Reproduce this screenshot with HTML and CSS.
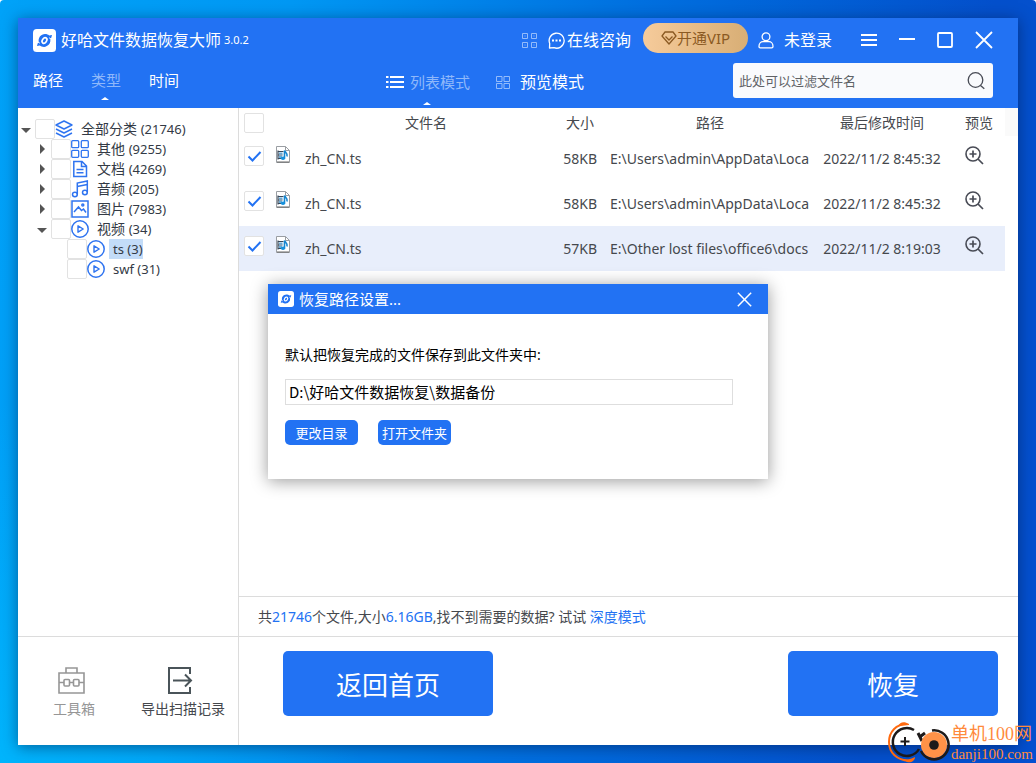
FILE: index.html
```html
<!DOCTYPE html>
<html lang="zh-CN">
<head>
<meta charset="utf-8">
<title>好哈文件数据恢复大师</title>
<link rel="stylesheet" href="styles.css">
</head>
<body>
<svg class="defs" width="0" height="0" aria-hidden="true">
  <symbol id="i-logo" viewBox="0 0 24 24">
    <rect width="24" height="24" rx="4" fill="#fff"/>
    <path d="M6.300 14.500C4.500 9.500 8.500 5.300 12.500 5.300c2 0 3.300.6 4.400 1.500l3-.6-1.300 4.200M17.700 9.500c1.800 5-2.200 9.200-6.200 9.200-2 0-3.300-.6-4.400-1.500l-3 .6 1.300-4.200" fill="#2272f3"/>
    <circle cx="12" cy="12" r="5.600" fill="#2272f3"/>
    <ellipse cx="12" cy="12" rx="3" ry="4" transform="rotate(35 12 12)" fill="#fff"/>
    <ellipse cx="12" cy="12" rx="1.300" ry="2.200" transform="rotate(35 12 12)" fill="#2272f3"/>
    <path d="M4.200 13.200l3 1.600M19.800 10.800l-3-1.600" stroke="#fff" stroke-width="1"/>
  </symbol>
  <symbol id="i-play" viewBox="0 0 18 18">
    <circle cx="9" cy="9" r="8.200" fill="none" stroke="#2f74f0" stroke-width="1.500"/>
    <path d="M7 5.800v6.400l5.200-3.200z" fill="none" stroke="#2f74f0" stroke-width="1.400" stroke-linejoin="round"/>
  </symbol>
  <symbol id="i-file" viewBox="0 0 14 17">
    <path d="M.5.500h9l4 4v12H.5z" fill="#fff" stroke="#9a9ea3"/>
    <path d="M9.500.500v4h4" fill="none" stroke="#9a9ea3"/>
    <path d="M1 16h12" stroke="#666"/>
    <path d="M1.500 5.500h6M1.500 12.500h4M2 4.500v9M1.500 9h5" fill="none" stroke="#38485a" stroke-width="1.200"/>
    <path d="M3 6.500h3.500v2H3zM3 9.800h3V12H3z" fill="#6aa9d4"/>
    <path d="M8.500 12V4.500c.5 2 3.500 2.500 2.500 6" fill="none" stroke="#1686d0" stroke-width="1.600"/>
    <ellipse cx="7" cy="12.300" rx="2.200" ry="1.700" fill="#1690dc"/>
  </symbol>
  <symbol id="i-zoom" viewBox="0 0 20 20">
    <circle cx="8" cy="8" r="7" fill="none" stroke="#484b55" stroke-width="1.600"/>
    <path d="M13 13l5 5M4.500 8h7M8 4.500v7" fill="none" stroke="#484b55" stroke-width="1.700"/>
  </symbol>
  <symbol id="i-close" viewBox="0 0 18 18">
    <path d="M1 1l16 16M17 1L1 17" fill="none" stroke="#fff" stroke-width="1.800"/>
  </symbol>
</svg>

<div class="desktop">
  <div class="window">
    <header class="header">
      <div class="titlebar">
        <svg class="logo"><use href="#i-logo"/></svg>
        <h1 class="title">好哈文件数据恢复大师</h1>
        <span class="version">3.0.2</span>
        <button class="plain qr" aria-label="二维码">
          <svg width="15" height="15" viewBox="0 0 15 15" fill="none" stroke="#94bcfb"><path d="M.5.500h5v5h-5zM9.500.500h5v5h-5zM.5 9.500h5v5h-5zM9.500 9.500h5v5h-5zM2.500 3h1M11.500 3h1M2.500 12h1M11.500 12h1"/></svg>
        </button>
        <button class="plain chat">
          <svg width="17" height="17" viewBox="0 0 17 17"><path d="M1.500 16l.2-4.500A7.500 7.500 0 1 1 6 15.700z" fill="none" stroke="#fff" stroke-width="1.300" stroke-linejoin="round"/><path d="M4 7.500h2v2H4zM7.500 7.500h2v2h-2zM11 7.500h2v2h-2z" fill="#fff"/></svg>
          在线咨询
        </button>
        <button class="vip">
          <svg width="16" height="14" viewBox="0 0 16 14" fill="none" stroke="#8b5a23" stroke-width="1.300" stroke-linejoin="round"><path d="M4 1h8l3 4-7 8-7-8zM4.500 5.500L8 9l3.500-3.500"/></svg>开通VIP
        </button>
        <button class="plain login">
          <svg width="16" height="17" viewBox="0 0 16 17" fill="none" stroke="#fff" stroke-width="1.300"><circle cx="8" cy="4.800" r="3.900"/><path d="M1 14.500c0-3 2-4.800 4-4.800h6c2 0 4 1.800 4 4.800 0 .9-.5 1.300-1.300 1.300H2.300C1.500 15.800 1 15.400 1 14.500z"/></svg>
          未登录
        </button>
        <div class="controls">
          <button class="plain" aria-label="菜单"><svg width="16" height="16" viewBox="0 0 16 16"><path d="M0 3h16M0 8h16M0 13h16" stroke="#fff" stroke-width="2"/></svg></button>
          <button class="plain" aria-label="最小化"><svg width="16" height="16" viewBox="0 0 16 16"><path d="M0 7h16" stroke="#fff" stroke-width="2"/></svg></button>
          <button class="plain" aria-label="最大化"><svg width="16" height="16" viewBox="0 0 16 16"><rect x="1" y="1" width="14" height="14" rx="1" fill="none" stroke="#fff" stroke-width="1.800"/></svg></button>
          <button class="plain" aria-label="关闭"><svg width="18" height="18"><use href="#i-close"/></svg></button>
        </div>
      </div>
      <div class="toolbar">
        <nav class="tabs">
          <button class="plain tab">路径</button>
          <button class="plain tab active">类型</button>
          <button class="plain tab">时间</button>
        </nav>
        <div class="modes">
          <button class="plain mode active">
            <svg width="18" height="14" viewBox="0 0 18 14"><path d="M0 2h2.500M4 2h14M0 7h2.500M4 7h14M0 12h2.500M4 12h14" stroke="#fff" stroke-width="2"/></svg>
            列表模式
          </button>
          <button class="plain mode preview">
            <svg width="14" height="13" viewBox="0 0 14 13" fill="none" stroke="#94bcfb"><path d="M.5.500h5.500v5H.5zM8 .500h5.500v5H8zM.5 7.500h5.500v5H.5zM8 7.500h5.500v5H8z"/></svg>
            预览模式
          </button>
        </div>
        <div class="search">
          <input type="text" placeholder="此处可以过滤文件名" aria-label="过滤文件名">
          <button class="plain" aria-label="搜索"><svg width="18" height="18" viewBox="0 0 18 18" fill="none" stroke="#484b55" stroke-width="1.300"><circle cx="8.500" cy="8" r="7.300"/><path d="M13.500 13.500l3.800 3.300"/></svg></button>
        </div>
      </div>
    </header>

    <div class="body">
      <aside class="sidebar">
        <ul class="tree">
          <li>
            <div class="node"><button class="plain arrow open" aria-label="折叠"></button><input type="checkbox" id="t0" class="check">
              <svg width="18" height="18" viewBox="0 0 18 18" fill="none" stroke="#2f74f0" stroke-width="1.400" stroke-linejoin="round"><path d="M9 1l8 4-8 4-8-4zM1 9l8 4 8-4M1 13l8 4 8-4"/></svg>
              <label for="t0">全部分类 <span class="count">(21746)</span></label></div>
            <ul>
              <li><div class="node"><button class="plain arrow" aria-label="展开"></button><input type="checkbox" id="t1" class="check">
                <svg width="18" height="18" viewBox="0 0 18 18" fill="none" stroke="#2f74f0" stroke-width="1.300"><rect x=".7" y=".7" width="7" height="7" rx="1"/><rect x="10.300" y=".7" width="7" height="7" rx="1"/><rect x=".7" y="10.300" width="7" height="7" rx="1"/><rect x="10.300" y="10.300" width="7" height="7" rx="1"/></svg>
                <label for="t1">其他 <span class="count">(9255)</span></label></div></li>
              <li><div class="node"><button class="plain arrow" aria-label="展开"></button><input type="checkbox" id="t2" class="check">
                <svg width="18" height="18" viewBox="0 0 18 18" fill="none" stroke="#2f74f0" stroke-width="1.500"><path d="M2.800 1.500h8.200l4.500 4.500v10.500H2.800zM10.500 1.500v5h5M5.500 9.500h7M5.500 12.800h7"/></svg>
                <label for="t2">文档 <span class="count">(4269)</span></label></div></li>
              <li><div class="node"><button class="plain arrow" aria-label="展开"></button><input type="checkbox" id="t3" class="check">
                <svg width="18" height="18" viewBox="0 0 18 18" fill="none" stroke="#2f74f0" stroke-width="1.500"><path d="M6.300 14.500V3l10-2v11.500M6.300 6.500l10-2"/><ellipse cx="3.900" cy="14.500" rx="2.400" ry="2.200"/><ellipse cx="13.900" cy="12.500" rx="2.400" ry="2.200"/></svg>
                <label for="t3">音频 <span class="count">(205)</span></label></div></li>
              <li><div class="node"><button class="plain arrow" aria-label="展开"></button><input type="checkbox" id="t4" class="check">
                <svg width="18" height="18" viewBox="0 0 18 18" fill="none" stroke="#2f74f0" stroke-width="1.500"><rect x="1" y="1" width="16" height="16"/><path d="M3 12l4.500-5 3 3.500L12.500 9l2.500 3.500"/><circle cx="11.800" cy="5" r="1"/></svg>
                <label for="t4">图片 <span class="count">(7983)</span></label></div></li>
              <li><div class="node"><button class="plain arrow open" aria-label="折叠"></button><input type="checkbox" id="t5" class="check">
                <svg width="18" height="18"><use href="#i-play"/></svg>
                <label for="t5">视频 <span class="count">(34)</span></label></div>
                <ul>
                  <li><div class="node leaf"><input type="checkbox" id="t6" class="check"><svg width="18" height="18"><use href="#i-play"/></svg><label for="t6" class="selected"><span class="count">ts (3)</span></label></div></li>
                  <li><div class="node leaf"><input type="checkbox" id="t7" class="check"><svg width="18" height="18"><use href="#i-play"/></svg><label for="t7"><span class="count">swf (31)</span></label></div></li>
                </ul>
              </li>
            </ul>
          </li>
        </ul>
      </aside>

      <main class="main">
        <div class="list">
          <table class="files">
            <colgroup><col class="c-check"><col class="c-icon"><col><col class="c-size"><col class="c-path"><col class="c-date"><col class="c-view"></colgroup>
            <thead>
              <tr><th><input type="checkbox" class="check" aria-label="全选"></th><th></th><th>文件名</th><th>大小</th><th>路径</th><th>最后修改时间</th><th class="view">预览</th></tr>
            </thead>
            <tbody>
              <tr><td><input type="checkbox" class="check" checked aria-label="选择 zh_CN.ts"></td><td><svg class="ficon"><use href="#i-file"/></svg></td><td class="name">zh_CN.ts</td><td class="size">58KB</td><td class="path"><div>E:\Users\admin\AppData\Loca</div></td><td class="date">2022/11/2 8:45:32</td><td class="view"><button class="plain" aria-label="预览"><svg width="20" height="20"><use href="#i-zoom"/></svg></button></td></tr>
              <tr><td><input type="checkbox" class="check" checked aria-label="选择 zh_CN.ts"></td><td><svg class="ficon"><use href="#i-file"/></svg></td><td class="name">zh_CN.ts</td><td class="size">58KB</td><td class="path"><div>E:\Users\admin\AppData\Loca</div></td><td class="date">2022/11/2 8:45:32</td><td class="view"><button class="plain" aria-label="预览"><svg width="20" height="20"><use href="#i-zoom"/></svg></button></td></tr>
              <tr class="current"><td><input type="checkbox" class="check" checked aria-label="选择 zh_CN.ts"></td><td><svg class="ficon"><use href="#i-file"/></svg></td><td class="name">zh_CN.ts</td><td class="size">57KB</td><td class="path"><div>E:\Other lost files\office6\docs</div></td><td class="date">2022/11/2 8:19:03</td><td class="view"><button class="plain" aria-label="预览"><svg width="20" height="20"><use href="#i-zoom"/></svg></button></td></tr>
            </tbody>
          </table>
          <div class="gutter"></div>
        </div>
        <p class="status">共<span class="hl">21746</span>个文件,大小<span class="hl">6.16GB</span>,找不到需要的数据? 试试 <a href="#" class="deep">深度模式</a></p>
      </main>
    </div>

    <footer class="footer">
      <div class="tools">
        <button class="plain tool muted">
          <svg width="27" height="27" viewBox="0 0 27 27" fill="none" stroke="#969696" stroke-width="1.600"><path d="M1 6h25v20H1zM8 6V1h11v5M1 15.500h5M11.500 15.500h4M21 15.500h5"/><rect x="6" y="12.500" width="5.500" height="6.500" rx="1"/><rect x="15.500" y="12.500" width="5.500" height="6.500" rx="1"/></svg>
          工具箱
        </button>
        <button class="plain tool">
          <svg width="27" height="27" viewBox="0 0 27 27" fill="none" stroke="#4a5459" stroke-width="2"><path d="M23 7V1H2v25h21v-6M6 13.500h18M18 7.500l6 6-6 6"/></svg>
          导出扫描记录
        </button>
      </div>
      <div class="actions">
        <button class="big">返回首页</button>
        <button class="big">恢复</button>
      </div>
    </footer>

    <div class="overlay">
      <section class="dialog" role="dialog" aria-labelledby="dlg-title">
        <div class="dialog-head">
          <svg width="16" height="16"><use href="#i-logo"/></svg>
          <h2 id="dlg-title">恢复路径设置...</h2>
          <button class="plain" aria-label="关闭对话框"><svg width="15" height="15"><use href="#i-close"/></svg></button>
        </div>
        <div class="dialog-body">
          <label for="dir">默认把恢复完成的文件保存到此文件夹中:</label>
          <input id="dir" type="text" value="D:\好哈文件数据恢复\数据备份">
          <div class="dialog-actions">
            <button class="small">更改目录</button>
            <button class="small">打开文件夹</button>
          </div>
        </div>
      </section>
    </div>
  </div>

  <div class="watermark">
    <svg width="64" height="42" viewBox="0 0 64 42" fill="none">
      <path d="M20 3C9 3 2 11 2 21c0 11 8 18 20 19" stroke="#ff6a0f" stroke-width="2"/>
      <path d="M11 5c2-4 6-5 11-2v1zM16 38c5 1 8 0 12-2 0 4-4 6-8 5z" fill="#ff6a0f"/>
      <path d="M27 9A14 14 0 1 0 32 28" stroke="#1d1a1a" stroke-width="2.500"/>
      <path d="M13.500 20.500h9M18 16v9" stroke="#1d1a1a" stroke-width="2"/>
      <path d="M31 12l4 8M34 15l4-3" stroke="#1d1a1a" stroke-width="3"/>
      <circle cx="47" cy="24" r="13" fill="#ff9248"/>
      <path d="M45 9.500A14.500 14.500 0 1 1 34 30" stroke="#1d1a1a" stroke-width="2.500"/>
      <circle cx="47" cy="24" r="4.800" fill="#1d1a1a"/>
    </svg>
    <div class="wm-text"><span class="wm-name">单机100网</span><span class="wm-url">danji100.com</span></div>
  </div>
</div>
</body>
</html>
```

FILE: styles.css
```css
* { box-sizing: border-box; }

body {
  margin: 0;
  background: #fff;
  color: #45484d;
  font: 14px/20px "Noto Sans", "Noto Sans CJK SC", sans-serif;
}

h1, h2, p, ul { margin: 0; padding: 0; font-weight: 400; }
ul { list-style: none; }
svg { display: block; flex: none; }
.defs { position: absolute; }
button, input { font: inherit; color: inherit; }

.plain {
  display: flex;
  align-items: center;
  padding: 0;
  border: 0;
  background: none;
  white-space: nowrap;
  cursor: pointer;
}

.desktop {
  position: relative;
  height: 100vh;
  padding: 18px;
  overflow: hidden;
  border-radius: 4px 4px 0 0;
  background:
    radial-gradient(circle at 0 100%, rgba(0, 190, 255, 0.7), rgba(0, 190, 255, 0) 360px),
    linear-gradient(100deg, #00a2f8 0%, #0098f4 25%, #0070e0 55%, #0450cc 85%, #0450d0 100%);
}

.window {
  position: relative;
  display: flex;
  flex-direction: column;
  height: 100%;
  background: #fff;
  box-shadow: 0 2px 14px rgba(0, 20, 60, 0.5);
}

/* header */
.header { background: #2272f3; color: #fff; padding: 0 25px 0 15px; }
.titlebar { display: flex; align-items: center; height: 44px; }
.logo { width: 23px; height: 23px; margin-right: 5px; }
.title { font-size: 16px; white-space: nowrap; }
.version { margin-left: 3px; font-size: 11px; }
.qr { margin-left: auto; margin-right: 11px; }
.chat { gap: 2px; margin-right: 12px; font-size: 16px; }
.vip {
  display: flex;
  align-items: center;
  justify-content: center;
  width: 105px;
  height: 30px;
  margin: 0 10px 4px 0;
  padding: 0;
  border: 0;
  border-radius: 15px;
  background: linear-gradient(90deg, #f6cb9b, #d8ae75);
  color: #8b5a23;
  font-size: 15px;
}
.login { gap: 10px; font-size: 16px; }
.controls { display: flex; gap: 22px; margin-left: 29px; }

.toolbar { display: flex; align-items: flex-start; height: 46px; padding-top: 1px; }
.tabs { display: flex; gap: 28px; }
.tab { position: relative; height: 33px; font-size: 15px; }
.modes { display: flex; gap: 26px; margin-left: 207px; }
.mode { position: relative; gap: 6px; height: 38px; font-size: 15px; }
.preview { gap: 10px; font-size: 16px; }
.tab.active, .mode.active { color: #8fb8fa; }
.tab.active::after, .mode.active::after {
  content: "";
  position: absolute;
  left: 50%;
  bottom: -4px;
  margin-left: -5px;
  border: 4px solid transparent;
  border-top: 0;
  border-bottom: 3px solid #fff;
}
.search {
  display: flex;
  align-items: center;
  width: 260px;
  height: 35px;
  margin-left: auto;
  padding: 0 8px 0 6px;
  border-radius: 3px;
  background: #f9fafd;
}
.search input {
  flex: 1;
  min-width: 0;
  padding: 0;
  border: 0;
  background: none;
  outline: 0;
  font-size: 13px;
  color: #45484d;
}
.search input::placeholder { color: #606266; opacity: 1; }

/* check boxes */
.check {
  appearance: none;
  flex: none;
  display: block;
  width: 20px;
  height: 20px;
  margin: 0;
  border: 1px solid #e2e2e2;
  border-radius: 2px;
  background: #fff;
}
.check:checked {
  background: #fff url("data:image/svg+xml,%3Csvg xmlns='http://www.w3.org/2000/svg' viewBox='0 0 18 18'%3E%3Cpath d='M3.500 9.500l4 4 8-8.500' fill='none' stroke='%232272f3' stroke-width='2'/%3E%3C/svg%3E") center / 18px no-repeat;
}

/* body */
.body { display: flex; flex: 1; min-height: 0; }
.sidebar { width: 221px; padding: 11px 0 0 3px; border-right: 1px solid #dcdcdc; }
.tree ul { padding-left: 16px; }
.node { display: flex; align-items: center; height: 20px; color: #333a45; white-space: nowrap; }
.node label { margin-left: 4px; padding: 0 0 0 4px; }
.count { font-size: 13px; }
.leaf { padding-left: 14px; }
.selected { background: #c3dcf8; }
.arrow { width: 14px; height: 20px; }
.arrow::before {
  content: "";
  margin-left: 3px;
  border: 5px solid transparent;
  border-right: 0;
  border-left-color: #555;
}
.arrow.open::before {
  margin: 2px 0 0;
  border: 5px solid transparent;
  border-bottom: 0;
  border-top-color: #555;
}

.main { display: flex; flex: 1; flex-direction: column; min-width: 0; }
.list { display: flex; flex: 1; min-height: 0; }
.gutter { width: 13px; height: 28px; background: #fafafa; }
.files { flex: 1; width: 100%; table-layout: fixed; border-collapse: collapse; align-self: flex-start; }
.c-check { width: 30px; }
.c-icon { width: 26px; }
.c-size { width: 46px; }
.c-path { width: 214px; }
.c-date { width: 130px; }
.c-view { width: 58px; }
.files th { height: 28px; padding: 2px 0 0; font-weight: 400; text-align: center; }
.files td { height: 45px; padding: 0; white-space: nowrap; }
.files .check { margin-left: 5px; }
.files td .check { margin-bottom: 5px; }
.ficon { width: 14px; height: 17px; margin: 0 0 8px 7px; }
.files .name { padding-left: 10px; }
.files .size { padding-right: 6px; text-align: right; }
.files .path { padding: 0 7px; }
.files .date { text-align: center; }
.files .view { padding-left: 18px; text-align: left; }
.files td.view { padding-bottom: 6px; }
.current { background: #e8eefb; }

.status { height: 40px; padding: 0 19px; border-top: 1px solid #dcdcdc; line-height: 40px; }
.hl, .deep { color: #2272f3; text-decoration: none; }

/* footer */
.footer { display: flex; height: 109px; border-top: 1px solid #dcdcdc; }
.tools {
  display: flex;
  align-items: flex-start;
  gap: 46px;
  width: 221px;
  padding: 30px 0 0 35px;
  border-right: 1px solid #dcdcdc;
}
.tool { flex-direction: column; gap: 5px; }
.tool svg { margin-right: 6px; }
.muted { color: #969696; }
.actions {
  display: flex;
  flex: 1;
  justify-content: space-between;
  align-items: flex-start;
  padding: 14px 20px 0 44px;
}
.big {
  width: 210px;
  height: 65px;
  padding: 2px 0 0;
  border: 0;
  border-radius: 5px;
  background: #2272f3;
  color: #fff;
  font-size: 26px;
}

/* dialog */
.overlay {
  position: absolute;
  inset: 0;
  display: flex;
  align-items: center;
  justify-content: center;
}
.dialog { width: 500px; background: #fff; color: #000; box-shadow: 0 2px 16px rgba(0, 0, 0, 0.4); }
.dialog-head {
  display: flex;
  align-items: center;
  gap: 5px;
  height: 30px;
  padding: 0 16px 0 10px;
  background: #2272f3;
  color: #fff;
}
.dialog-head h2 { flex: 1; font-size: 15px; }
.dialog-body { display: flex; flex-direction: column; padding: 31px 35px 34px 17px; }
.dialog-body input {
  height: 26px;
  margin: 14px 0 15px;
  padding: 0 3px 2px;
  border: 1px solid #dedede;
  font: 15px "Noto Sans CJK SC", sans-serif;
}
.dialog-actions { display: flex; gap: 20px; }
.small {
  width: 73px;
  height: 25px;
  padding: 0;
  border: 0;
  border-radius: 5px;
  background: #2272f3;
  color: #fff;
  font-size: 13px;
  line-height: 20px;
}

/* site mark over the corner */
.watermark { position: absolute; right: 3px; bottom: 0; display: flex; color: #ff8a3c; }
.wm-text { display: flex; flex-direction: column; padding-top: 2px; }
.wm-name { font: 18px/22px "Liberation Serif", "Noto Sans CJK SC", serif; }
.wm-url { font: 15px/18px "Liberation Serif", serif; }
```
